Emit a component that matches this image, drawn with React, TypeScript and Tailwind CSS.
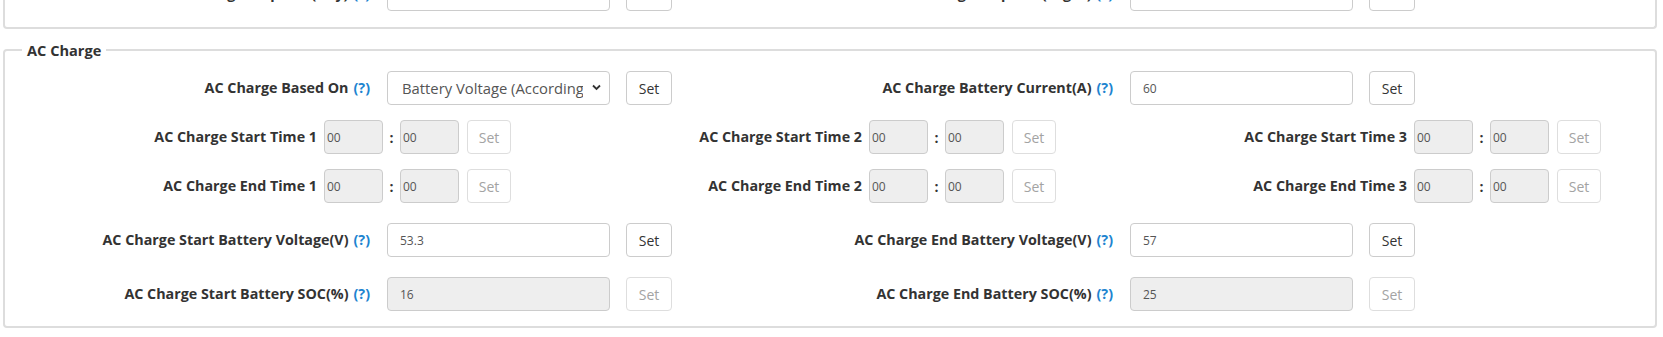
import React from "react";

const Help = () => (
  <span className="ml-[5px] font-bold text-[#1d84d0]">(?)</span>
);

const SetButton = ({ disabled, w = "w-[46px]" }: { disabled?: boolean; w?: string }) => (
  <button
    disabled={disabled}
    className={
      "h-[34px] rounded-[4px] border bg-white text-[14px] " +
      w +
      (disabled ? " border-[#dedede] text-[#a3a3a3]" : " border-[#cccccc] text-[#333333]")
    }
  >
    Set
  </button>
);

const TextField = ({ value, disabled }: { value: string; disabled?: boolean }) => (
  <input
    readOnly
    value={value}
    disabled={disabled}
    className={
      "h-[34px] w-[223px] rounded-[4px] border border-[#cccccc] px-[12px] text-[12px] text-[#555555] outline-none" +
      (disabled ? " bg-[#eeeeee]" : " bg-white")
    }
  />
);

const FieldGroup = ({
  label,
  children,
}: {
  label: string;
  children: React.ReactNode;
}) => (
  <div className="flex w-[743px] items-center">
    <div className="w-[373px] pr-[17px] text-right text-[14.3px] font-bold text-[#333333]">
      {label}
      <Help />
    </div>
    {children}
  </div>
);

const TimeGroup = ({ label }: { label: string }) => (
  <div className="flex w-[545px] items-center">
    <div className="w-[310px] pr-[7px] text-right text-[14.3px] font-bold text-[#333333]">
      {label}
    </div>
    <input
      disabled
      value="00"
      readOnly
      className="h-[34px] w-[59px] rounded-[4px] border border-[#cccccc] bg-[#eeeeee] pl-[2px] text-[12px] text-[#555555]"
    />
    <span className="w-[17px] text-center text-[14px] font-bold text-[#333333]">:</span>
    <input
      disabled
      value="00"
      readOnly
      className="h-[34px] w-[59px] rounded-[4px] border border-[#cccccc] bg-[#eeeeee] pl-[2px] text-[12px] text-[#555555]"
    />
    <div className="ml-[8px]">
      <SetButton disabled w="w-[44px]" />
    </div>
  </div>
);

export default function App() {
  return (
    <div className="h-[337px] w-[1663px] overflow-hidden bg-white font-['Open_Sans','Liberation_Sans',sans-serif]">
      {/* tail of the previous section, scrolled mostly out of view */}
      <div className="ml-[3px] mr-[6px] rounded-b-[4px] border-2 border-t-0 border-[#dddddd] pb-[16px] pl-[9px]">
        <div className="-mt-[23px] flex h-[34px] items-center">
          <FieldGroup label="Grid Charge Stop SOC(Day)">
            <TextField value="" />
            <div className="ml-[16px]">
              <SetButton />
            </div>
          </FieldGroup>
          <FieldGroup label="Grid Charge Stop SOC(Night)">
            <TextField value="" />
            <div className="ml-[16px]">
              <SetButton />
            </div>
          </FieldGroup>
        </div>
      </div>

      <fieldset className="ml-[3px] mr-[6px] mt-[11px] rounded-[4px] border-2 border-[#dddddd] pb-[15px] pl-[9px] pt-[11px]">
        <legend className="ml-[8px] px-[5px] text-[14.6px] font-bold leading-[20px] text-[#333333]">
          AC Charge
        </legend>

        <div className="mb-[15px] flex h-[34px] items-center">
          <FieldGroup label="AC Charge Based On">
            <div className="relative h-[34px] w-[223px]">
              <select className="h-[34px] w-full appearance-none rounded-[4px] border border-[#cccccc] bg-white pl-[14px] pr-[26px] text-[14.8px] text-[#555555] outline-none">
                <option>Battery Voltage (According to Battery Type)</option>
              </select>
              <svg
                className="pointer-events-none absolute right-[9px] top-[13px]"
                width="9"
                height="7"
                viewBox="0 0 9 7"
              >
                <path d="M1 1.5 L4.5 5 L8 1.5" fill="none" stroke="#333" strokeWidth="1.8" />
              </svg>
            </div>
            <div className="ml-[16px]">
              <SetButton />
            </div>
          </FieldGroup>
          <FieldGroup label="AC Charge Battery Current(A)">
            <TextField value="60" />
            <div className="ml-[16px]">
              <SetButton />
            </div>
          </FieldGroup>
        </div>

        <div className="mb-[15px] flex h-[34px] items-center">
          <TimeGroup label="AC Charge Start Time 1" />
          <TimeGroup label="AC Charge Start Time 2" />
          <TimeGroup label="AC Charge Start Time 3" />
        </div>

        <div className="mb-[20px] flex h-[34px] items-center">
          <TimeGroup label="AC Charge End Time 1" />
          <TimeGroup label="AC Charge End Time 2" />
          <TimeGroup label="AC Charge End Time 3" />
        </div>

        <div className="mb-[20px] flex h-[34px] items-center">
          <FieldGroup label="AC Charge Start Battery Voltage(V)">
            <TextField value="53.3" />
            <div className="ml-[16px]">
              <SetButton />
            </div>
          </FieldGroup>
          <FieldGroup label="AC Charge End Battery Voltage(V)">
            <TextField value="57" />
            <div className="ml-[16px]">
              <SetButton />
            </div>
          </FieldGroup>
        </div>

        <div className="flex h-[34px] items-center">
          <FieldGroup label="AC Charge Start Battery SOC(%)">
            <TextField value="16" disabled />
            <div className="ml-[16px]">
              <SetButton disabled />
            </div>
          </FieldGroup>
          <FieldGroup label="AC Charge End Battery SOC(%)">
            <TextField value="25" disabled />
            <div className="ml-[16px]">
              <SetButton disabled />
            </div>
          </FieldGroup>
        </div>
      </fieldset>
    </div>
  );
}
